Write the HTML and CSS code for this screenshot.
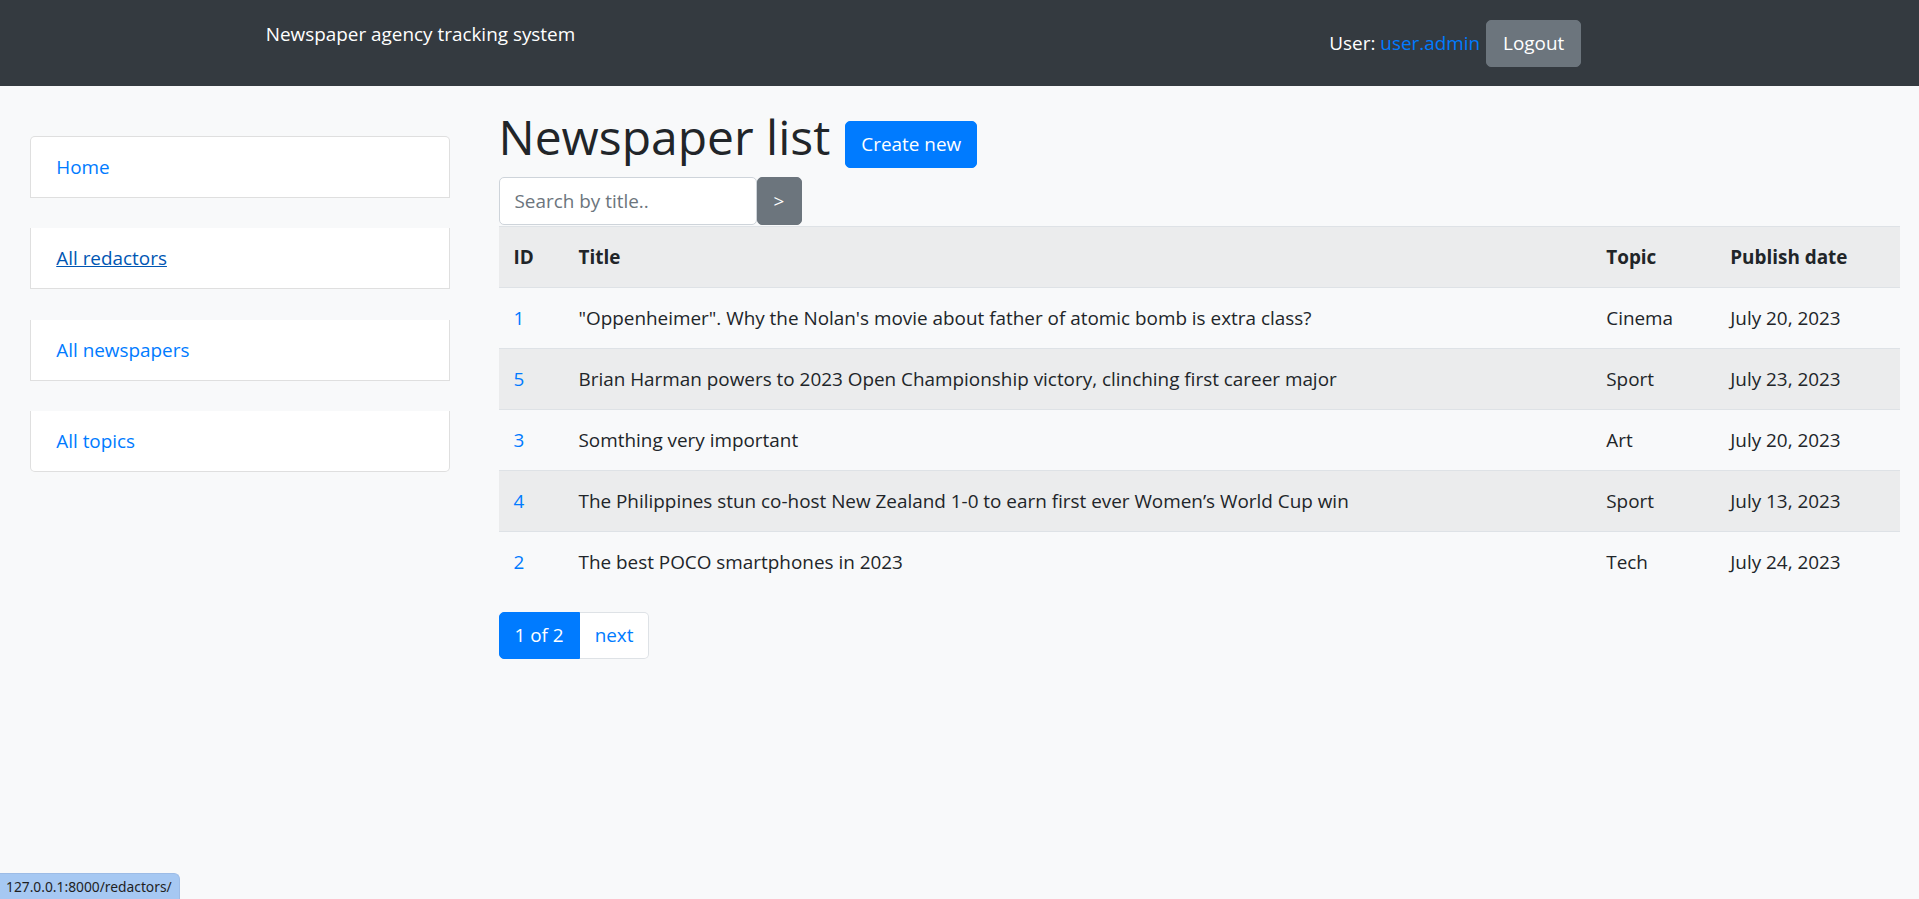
FILE: index.html
```html
<!DOCTYPE html>
<html lang="en">
<head>
<meta charset="utf-8">
<title>Newspaper list</title>
<link rel="stylesheet" href="styles.css">
</head>
<body>
<header class="navbar">
  <div class="navbar-inner">
    <a class="brand" href="#">Newspaper agency tracking system</a>
    <div class="nav-user">
      <span class="user-label">User: <a class="user-link" href="#">user.admin</a></span>
      <a class="btn btn-secondary" href="#">Logout</a>
    </div>
  </div>
</header>
<div class="layout">
  <aside class="sidebar">
    <ul class="side-list">
      <li class="side-item"><a href="#">Home</a></li>
      <li class="side-item"><a class="hovered" href="#">All redactors</a></li>
      <li class="side-item"><a href="#">All newspapers</a></li>
      <li class="side-item"><a href="#">All topics</a></li>
    </ul>
  </aside>
  <main class="content">
    <div class="title-row">
      <h1 class="page-title">Newspaper list</h1>
      <a class="btn btn-primary" href="#">Create new</a>
    </div>
    <form class="search-form">
      <input class="search-input" type="text" placeholder="Search by title..">
      <button class="search-btn" type="button">&gt;</button>
    </form>
    <table class="table">
      <tbody>
        <tr class="head-row">
          <th class="col-id">ID</th>
          <th class="col-title">Title</th>
          <th class="col-topic">Topic</th>
          <th class="col-date">Publish date</th>
        </tr>
        <tr><td><a href="#">1</a></td><td>"Oppenheimer". Why the Nolan's movie about father of atomic bomb is extra class?</td><td>Cinema</td><td>July 20, 2023</td></tr>
        <tr><td><a href="#">5</a></td><td>Brian Harman powers to 2023 Open Championship victory, clinching first career major</td><td>Sport</td><td>July 23, 2023</td></tr>
        <tr><td><a href="#">3</a></td><td>Somthing very important</td><td>Art</td><td>July 20, 2023</td></tr>
        <tr><td><a href="#">4</a></td><td>The Philippines stun co-host New Zealand 1-0 to earn first ever Women’s World Cup win</td><td>Sport</td><td>July 13, 2023</td></tr>
        <tr><td><a href="#">2</a></td><td>The best POCO smartphones in 2023</td><td>Tech</td><td>July 24, 2023</td></tr>
      </tbody>
    </table>
    <ul class="pagination">
      <li class="page-item active"><span class="page-link">1 of 2</span></li>
      <li class="page-item"><a class="page-link" href="#">next</a></li>
    </ul>
  </main>
</div>
<div class="status-bubble">127.0.0.1:8000/redactors/</div>
</body>
</html>
```

FILE: styles.css
```css
* { box-sizing: border-box; }

html, body {
  margin: 0;
  padding: 0;
}

body {
  background: #f8f9fa;
  color: #212529;
  font-family: "Open Sans", "Noto Sans", sans-serif;
  font-size: 18.9px;
  line-height: 30px;
  min-height: 899px;
}

a {
  color: #007bff;
  text-decoration: none;
}

/* Header */
.navbar {
  background: #343a40;
  height: 86px;
}

.navbar-inner {
  max-width: 1425px;
  margin: 0 auto;
  padding: 0 18.75px;
  height: 86px;
  display: flex;
  align-items: center;
}

.brand {
  align-self: flex-start;
  margin-top: 19px;
  color: #fff;
  line-height: 30px;
}

.nav-user {
  margin-left: auto;
  margin-right: 72px;
  display: flex;
  align-items: center;
  gap: 6px;
}

.user-label {
  color: #fff;
}

.user-link {
  color: #007bff;
}

.btn {
  display: inline-block;
  padding: 7.5px 15px;
  border: 1.25px solid transparent;
  border-radius: 5px;
  line-height: 30px;
  font-size: 18.9px;
  color: #fff;
}

.btn-secondary {
  background: #6c757d;
  border-color: #6c757d;
  padding: 7.5px 16px;
}

.btn-primary {
  background: #007bff;
  border-color: #007bff;
  padding: 7.5px 15px;
}

/* Layout */
.layout {
  display: grid;
  grid-template-columns: 25% 75%;
}

.sidebar {
  padding: 0 18.75px;
}

.side-list {
  list-style: none;
  margin: 50px 11.5px 0;
  padding: 0;
}

.side-item {
  background: #fff;
  border: 1px solid rgba(0, 0, 0, 0.125);
  border-top-width: 0;
  padding: 15px 25px;
  line-height: 30px;
  margin-bottom: 30.3px;
}

.side-item:first-child {
  border-top-width: 1px;
  border-top-left-radius: 5px;
  border-top-right-radius: 5px;
}

.side-item:last-child {
  border-bottom-left-radius: 5px;
  border-bottom-right-radius: 5px;
}

.side-item a.hovered {
  color: #0056b3;
  text-decoration: underline;
}

.content {
  padding: 0 18.75px;
}

.title-row {
  display: flex;
  align-items: flex-end;
  gap: 15px;
  margin-top: 21px;
}

.page-title {
  margin: 0;
  font-size: 48px;
  font-weight: 500;
  line-height: 60px;
  color: #212529;
}

.title-row .btn {
  margin-bottom: -0.5px;
}

.search-form {
  display: flex;
  margin: 10px 0 0;
}

.search-input {
  width: 258px;
  height: 47.5px;
  padding: 7.5px 15px;
  border: 1.25px solid #ced4da;
  border-radius: 5px;
  background: #fff;
  font-family: inherit;
  font-size: 18.9px;
  line-height: 30px;
  color: #495057;
  outline: none;
}

.search-input::placeholder {
  color: #6c757d;
  opacity: 1;
}

.search-btn {
  width: 45px;
  height: 47.5px;
  padding: 0;
  margin: 0;
  border: 1.25px solid #6c757d;
  border-radius: 5px;
  background: #6c757d;
  color: #fff;
  font-family: inherit;
  font-size: 18.9px;
  line-height: 30px;
}

/* Table */
.table {
  width: 100%;
  border-collapse: collapse;
  margin: 1px 0 20px;
  table-layout: fixed;
  color: #212529;
}

.table th,
.table td {
  padding: 15px;
  border-top: 1px solid #dee2e6;
  text-align: left;
  vertical-align: top;
  line-height: 30px;
  white-space: nowrap;
}

.table th {
  font-weight: 700;
}

.table tr:nth-child(odd) {
  background: rgba(0, 0, 0, 0.05);
}

.col-id { width: 65px; }
.col-topic { width: 124px; }
.col-date { width: 185px; }

/* Pagination */
.pagination {
  list-style: none;
  margin: 0;
  padding: 0;
  display: flex;
}

.page-link {
  display: block;
  padding: 10px 15px;
  line-height: 25px;
  border: 1.25px solid #dee2e6;
  background: #fff;
  color: #007bff;
}

.page-item:first-child .page-link {
  border-top-left-radius: 5px;
  border-bottom-left-radius: 5px;
}

.page-item:last-child .page-link {
  border-top-right-radius: 5px;
  border-bottom-right-radius: 5px;
  border-left-width: 0;
}

.page-item.active .page-link {
  background: #007bff;
  border-color: #007bff;
  color: #fff;
}

/* Status bubble (browser overlay) */
.status-bubble {
  position: fixed;
  left: 0;
  bottom: 0;
  height: 26px;
  padding: 0 7px 0 6px;
  background: #a6c8f2;
  color: #1f1f1f;
  font-family: "Noto Sans", "Open Sans", sans-serif;
  font-size: 13.8px;
  line-height: 26px;
  border-top-right-radius: 6px;
  border-top: 1px solid #9dbce6;
  border-right: 1px solid #9dbce6;
}
```
